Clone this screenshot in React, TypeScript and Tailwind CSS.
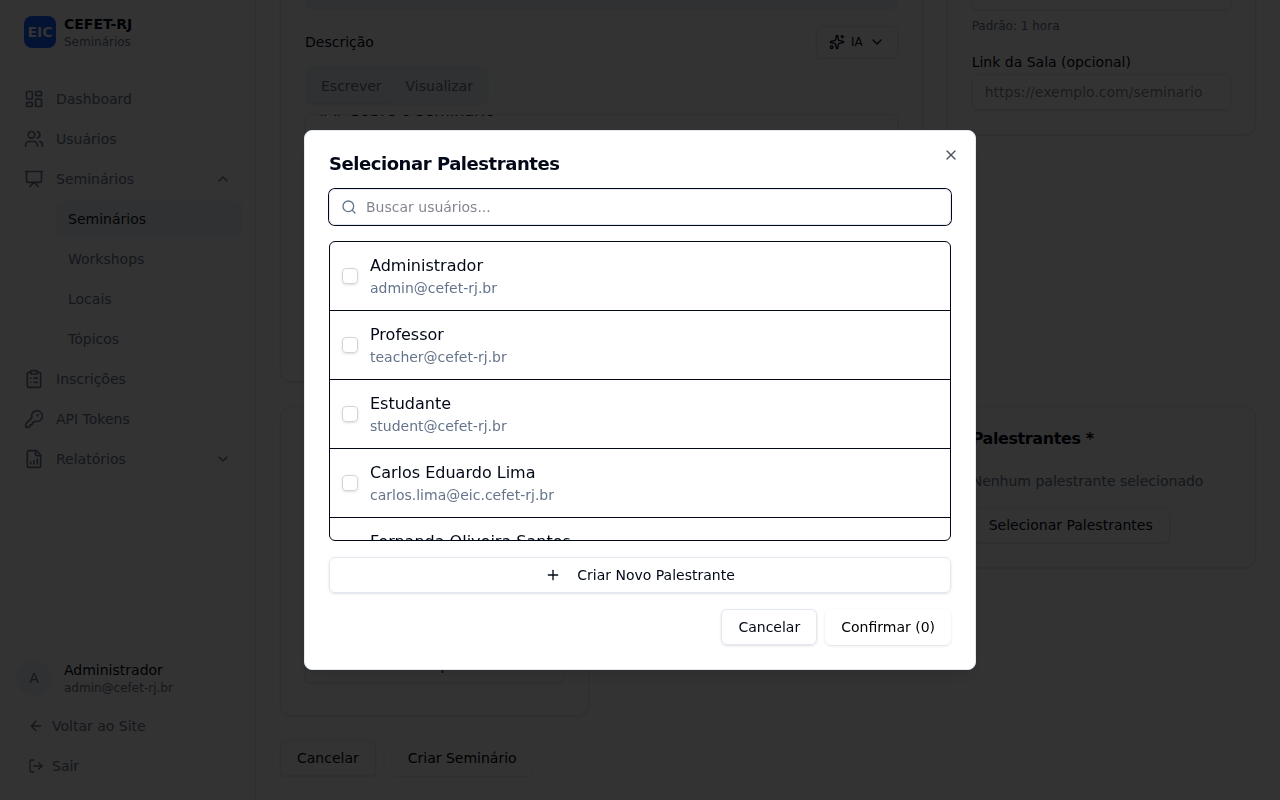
import { useEffect, useRef, type ReactNode } from "react";
import {
  ArrowLeft,
  ChevronDown,
  ChevronUp,
  ClipboardList,
  FileChartColumnIncreasing,
  KeyRound,
  LayoutDashboard,
  LogOut,
  Plus,
  Presentation,
  Search,
  Sparkles,
  Users,
  X,
} from "lucide-react";

const people = [
  { name: "Administrador", email: "admin@cefet-rj.br" },
  { name: "Professor", email: "teacher@cefet-rj.br" },
  { name: "Estudante", email: "student@cefet-rj.br" },
  { name: "Carlos Eduardo Lima", email: "carlos.lima@eic.cefet-rj.br" },
  { name: "Fernanda Oliveira Santos", email: "fernanda.santos@eic.cefet-rj.br" },
];

const description =
  "## Sobre o seminário\n\nDescreva o tema do seminário.\n\n## Objetivos\n\n- Objetivo 1\n- Objetivo 2\n\n## Público-alvo\n\nEstudantes e professores.";

const navItem = "flex w-full items-center gap-3 rounded-md px-3 py-2 text-left text-sm text-[#64748b]";
const outlineButton =
  "inline-flex h-9 items-center justify-center rounded-md border border-[#e2e8f0] px-4 text-sm font-medium shadow-sm";
const plainButton = "inline-flex h-9 items-center justify-center rounded-md px-4 text-sm font-medium text-black shadow-sm";
const field =
  "block h-9 w-full appearance-none rounded-md border border-[#e2e8f0] bg-transparent px-3 text-sm shadow-sm";

function Card({ title, className = "", children }: { title: string; className?: string; children: ReactNode }) {
  return (
    <section className={`rounded-xl border border-[#e2e8f0] px-6 pt-6 shadow-sm ${className}`}>
      <h2 className="mb-6 text-base leading-none font-semibold tracking-tight">{title}</h2>
      {children}
    </section>
  );
}

function Field({ id, label, children }: { id: string; label: string; children: ReactNode }) {
  return (
    <div>
      <label htmlFor={id} className="block text-sm leading-6 font-medium">
        {label}
      </label>
      {children}
    </div>
  );
}

function Sidebar() {
  return (
    <aside className="flex w-64 shrink-0 flex-col border-r border-[#e2e8f0]">
      <div className="mb-4 flex h-16 items-center gap-2 px-6">
        <div className="flex size-8 items-center justify-center rounded-lg bg-blue-600 text-sm font-bold text-white">
          EIC
        </div>
        <div>
          <p className="text-sm font-semibold">CEFET-RJ</p>
          <p className="text-xs text-[#64748b]">Seminários</p>
        </div>
      </div>
      <nav className="flex flex-1 flex-col gap-1 px-3 pt-px">
        <a href="#dashboard" className={navItem}>
          <LayoutDashboard size={20} /> Dashboard
        </a>
        <a href="#usuarios" className={navItem}>
          <Users size={20} /> Usuários
        </a>
        <button type="button" className={navItem}>
          <Presentation size={20} />
          <span className="flex-1">Seminários</span>
          <ChevronUp size={16} />
        </button>
        <div className="ml-11 flex flex-col gap-1 text-sm text-[#64748b]">
          <a href="#seminarios" className="rounded-md bg-[#f1f5f9] px-3 py-2 text-[#0f172a]">
            Seminários
          </a>
          <a href="#workshops" className="px-3 py-2">
            Workshops
          </a>
          <a href="#locais" className="px-3 py-2">
            Locais
          </a>
          <a href="#topicos" className="px-3 py-2">
            Tópicos
          </a>
        </div>
        <a href="#inscricoes" className={navItem}>
          <ClipboardList size={20} /> Inscrições
        </a>
        <a href="#tokens" className={navItem}>
          <KeyRound size={20} /> API Tokens
        </a>
        <button type="button" className={navItem}>
          <FileChartColumnIncreasing size={20} />
          <span className="flex-1">Relatórios</span>
          <ChevronDown size={16} />
        </button>
      </nav>
      <div className="flex flex-col gap-1 p-4 text-sm text-[#64748b]">
        <div className="mb-2 flex items-center gap-3">
          <div className="flex size-9 items-center justify-center rounded-full bg-[#f1f5f9]">A</div>
          <div>
            <p className="font-medium text-[#020817]">Administrador</p>
            <p className="text-xs">admin@cefet-rj.br</p>
          </div>
        </div>
        <a href="#site" className="flex h-9 items-center gap-2 px-3">
          <ArrowLeft size={16} /> Voltar ao Site
        </a>
        <button type="button" className="flex h-9 items-center gap-2 px-3">
          <LogOut size={16} /> Sair
        </button>
      </div>
    </aside>
  );
}

function DescriptionEditor() {
  const ref = useRef<HTMLTextAreaElement>(null);
  useEffect(() => {
    if (ref.current) ref.current.scrollTop = 24;
  }, []);
  return (
    <div className="mt-4">
      <div className="flex items-center justify-between">
        <label htmlFor="descricao" className="text-sm font-medium">
          Descrição
        </label>
        <button
          type="button"
          className="inline-flex h-8 items-center gap-1.5 rounded-md border border-[#e2e8f0] px-3 text-xs font-medium shadow-sm"
        >
          <Sparkles size={16} /> IA <ChevronDown size={16} />
        </button>
      </div>
      <div className="mt-2 inline-flex h-10 rounded-lg bg-[#f1f5f9] p-1 align-top text-sm font-medium text-[#64748b]">
        <button type="button" className="rounded-md px-3 shadow-sm">
          Escrever
        </button>
        <button type="button" className="rounded-md px-3">
          Visualizar
        </button>
      </div>
      <textarea
        id="descricao"
        ref={ref}
        defaultValue={description}
        className="mt-2 block h-[243px] w-full resize-none rounded-md border border-[#e2e8f0] px-3 py-2 text-base shadow-sm [scrollbar-width:none]"
      />
    </div>
  );
}

function SeminarForm() {
  return (
    <main className="flex min-w-0 flex-1 flex-col justify-end overflow-hidden p-6">
      <div className="grid shrink-0 grid-cols-3 items-start gap-6">
        <Card title="Informações Básicas" className="col-span-2 pb-6">
          <div className="flex flex-col gap-4">
            <Field id="titulo" label="Título *">
              <input id="titulo" className={field} />
            </Field>
            <Field id="slug" label="Slug">
              <input id="slug" readOnly className="block h-9 w-full rounded-md bg-[#f1f5f9] px-3 text-sm" />
            </Field>
          </div>
          <DescriptionEditor />
        </Card>
        <Card title="Data e Local" className="pb-6">
          <div className="flex flex-col gap-4">
            <Field id="data" label="Data *">
              <input id="data" className={field} />
            </Field>
            <div>
              <Field id="duracao" label="Duração">
                <input id="duracao" className={field} />
              </Field>
              <p className="mt-2 text-xs text-[#64748b]">Padrão: 1 hora</p>
            </div>
            <Field id="link" label="Link da Sala (opcional)">
              <input id="link" placeholder="https://exemplo.com/seminario" className={field} />
            </Field>
          </div>
        </Card>
        <Card title="Classificação" className="flex min-h-[310px] flex-col pb-8">
          <div className="mt-auto">
            <Field id="workshop" label="Workshop">
              <select id="workshop" className={field}>
                <option>Nenhum workshop</option>
              </select>
            </Field>
          </div>
        </Card>
        <Card title="Tópicos *" className="pb-6">
          <p className="text-sm text-[#64748b]">Nenhum tópico selecionado</p>
        </Card>
        <Card title="Palestrantes *" className="pb-6">
          <p className="mb-4 text-sm text-[#64748b]">Nenhum palestrante selecionado</p>
          <button type="button" className={`${outlineButton} align-top`}>
            Selecionar Palestrantes
          </button>
        </Card>
      </div>
      <div className="mt-6 flex shrink-0 gap-4">
        <button type="button" className={outlineButton}>
          Cancelar
        </button>
        <button type="button" className={plainButton}>
          Criar Seminário
        </button>
      </div>
    </main>
  );
}

function SpeakerDialog() {
  return (
    <div className="fixed inset-0 grid place-items-center bg-black/80">
      <div
        role="dialog"
        aria-modal="true"
        aria-labelledby="dialog-title"
        className="relative flex w-full max-w-2xl flex-col gap-4 rounded-lg border border-[#e2e8f0] bg-white p-6 shadow-lg"
      >
        <h2 id="dialog-title" className="text-lg leading-none font-semibold tracking-tight">
          Selecionar Palestrantes
        </h2>
        <button type="button" aria-label="Fechar" className="absolute top-4 right-4 opacity-70">
          <X size={16} />
        </button>
        <div className="relative">
          <Search size={16} className="absolute top-1/2 left-3 -translate-y-1/2 text-[#64748b]" />
          <input
            type="text"
            aria-label="Buscar usuários"
            placeholder="Buscar usuários..."
            className="block h-9 w-full rounded-md border border-[#e2e8f0] pr-3 pl-9 text-sm ring-1 ring-[#020817] outline-none"
          />
        </div>
        <ul className="h-[300px] divide-y divide-[#020817] overflow-y-auto rounded-md border border-[#020817] [scrollbar-width:none]">
          {people.map((person) => (
            <li key={person.email}>
              <label className="flex items-center gap-3 p-3">
                <input
                  type="checkbox"
                  className="size-4 shrink-0 appearance-none rounded-sm border border-[#d1d5db] shadow-sm"
                />
                <span>
                  <span className="block text-base font-medium">{person.name}</span>
                  <span className="block text-sm text-[#64748b]">{person.email}</span>
                </span>
              </label>
            </li>
          ))}
        </ul>
        <button type="button" className={`${outlineButton} gap-4`}>
          <Plus size={16} /> Criar Novo Palestrante
        </button>
        <div className="flex justify-end gap-2">
          <button type="button" className={outlineButton}>
            Cancelar
          </button>
          <button type="button" className={plainButton}>
            Confirmar (0)
          </button>
        </div>
      </div>
    </div>
  );
}

export default function App() {
  return (
    <div className="flex h-screen overflow-hidden bg-white font-['DejaVu_Sans',sans-serif] text-[#020817]">
      <Sidebar />
      <SeminarForm />
      <SpeakerDialog />
    </div>
  );
}
